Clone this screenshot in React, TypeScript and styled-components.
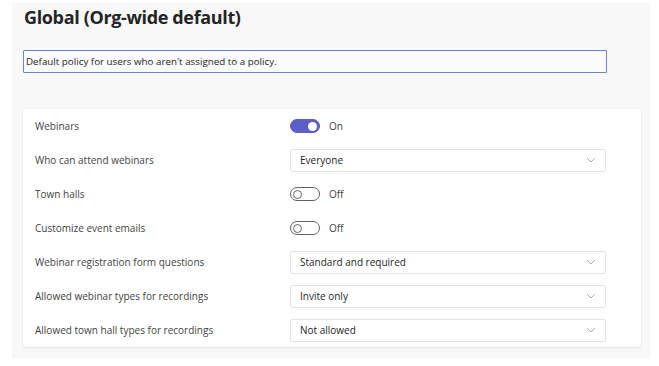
import styled, { createGlobalStyle } from "styled-components";

const GlobalStyle = createGlobalStyle`
  html, body {
    margin: 0;
    padding: 0;
    background: #ffffff;
  }
  body {
    font-family: "Open Sans", "Noto Sans", sans-serif;
    color: #242424;
  }
`;

type Setting =
  | { label: string; kind: "toggle"; on: boolean }
  | { label: string; kind: "select"; value: string };

const settings: Setting[] = [
  { label: "Webinars", kind: "toggle", on: true },
  { label: "Who can attend webinars", kind: "select", value: "Everyone" },
  { label: "Town halls", kind: "toggle", on: false },
  { label: "Customize event emails", kind: "toggle", on: false },
  {
    label: "Webinar registration form questions",
    kind: "select",
    value: "Standard and required",
  },
  {
    label: "Allowed webinar types for recordings",
    kind: "select",
    value: "Invite only",
  },
  {
    label: "Allowed town hall types for recordings",
    kind: "select",
    value: "Not allowed",
  },
];

function Chevron() {
  return (
    <svg width="10" height="6" viewBox="0 0 10 6" fill="none">
      <path
        d="M1.5 1.5l3.5 3.5 3.5-3.5"
        stroke="#a8a8a8"
        strokeWidth="1"
        strokeLinecap="round"
        strokeLinejoin="round"
      />
    </svg>
  );
}

export default function App() {
  return (
    <>
      <GlobalStyle />
      <Page>
        <Panel>
          <Title>Global (Org-wide default)</Title>
          <Description>
            Default policy for users who aren't assigned to a policy.
          </Description>
          <Card>
            {settings.map((s) => (
              <Row key={s.label}>
                <Label>{s.label}</Label>
                {s.kind === "toggle" ? (
                  <ToggleWrap>
                    <Toggle $on={s.on}>
                      <Knob $on={s.on} />
                    </Toggle>
                    <ToggleText>{s.on ? "On" : "Off"}</ToggleText>
                  </ToggleWrap>
                ) : (
                  <Select>
                    <span>{s.value}</span>
                    <Chevron />
                  </Select>
                )}
              </Row>
            ))}
          </Card>
        </Panel>
      </Page>
    </>
  );
}

const Page = styled.div`
  width: 659px;
  height: 366px;
  padding: 3px 9px 8px 12px;
  box-sizing: border-box;
  overflow: hidden;
`;

const Panel = styled.div`
  background: #f8f8f9;
  height: 100%;
  padding: 0 8px 0 11px;
  box-sizing: border-box;
  display: flex;
  flex-direction: column;
`;

const Title = styled.h1`
  margin: 0;
  padding: 1px 0 0 1px;
  font-size: 18px;
  line-height: 26px;
  font-weight: 700;
  color: #242424;
  letter-spacing: -0.35px;
`;

const Description = styled.div`
  margin-top: 20px;
  width: 584px;
  height: 23px;
  box-sizing: border-box;
  border: 1.5px solid #6b84cf;
  border-radius: 1px;
  background: #fafafb;
  padding: 0 2px;
  display: flex;
  align-items: center;
  font-size: 9.8px;
  color: #242424;
`;

const Card = styled.div`
  margin-top: 36px;
  width: 618px;
  background: #ffffff;
  border-radius: 3px;
  box-shadow: 0 0 2px rgba(0, 0, 0, 0.06), 0 1px 2px rgba(0, 0, 0, 0.08);
  display: flex;
  flex-direction: column;
`;

const Row = styled.div`
  height: 34px;
  display: grid;
  grid-template-columns: 255px 316px;
  align-items: center;
  padding-left: 12px;
`;

const Label = styled.span`
  font-size: 10px;
  color: #424242;
`;

const ToggleWrap = styled.div`
  display: flex;
  align-items: center;
  gap: 9px;
`;

const Toggle = styled.div<{ $on: boolean }>`
  width: 30px;
  height: 14px;
  box-sizing: border-box;
  border-radius: 7px;
  border: 1px solid ${({ $on }) => ($on ? "#5b5fc7" : "#616161")};
  background: ${({ $on }) => ($on ? "#5b5fc7" : "#ffffff")};
  display: flex;
  align-items: center;
  justify-content: ${({ $on }) => ($on ? "flex-end" : "flex-start")};
  padding: 0 2px;
`;

const Knob = styled.div<{ $on: boolean }>`
  width: 9px;
  height: 9px;
  box-sizing: border-box;
  border-radius: 50%;
  background: ${({ $on }) => ($on ? "#ffffff" : "transparent")};
  border: ${({ $on }) => ($on ? "none" : "1px solid #616161")};
`;

const ToggleText = styled.span`
  font-size: 10px;
  color: #424242;
`;

const Select = styled.div`
  height: 23px;
  box-sizing: border-box;
  border: 1px solid #e3e3e3;
  border-radius: 2px;
  background: #ffffff;
  display: flex;
  align-items: center;
  justify-content: space-between;
  padding: 0 9px 0 9px;
  font-size: 10px;
  color: #242424;
`;
